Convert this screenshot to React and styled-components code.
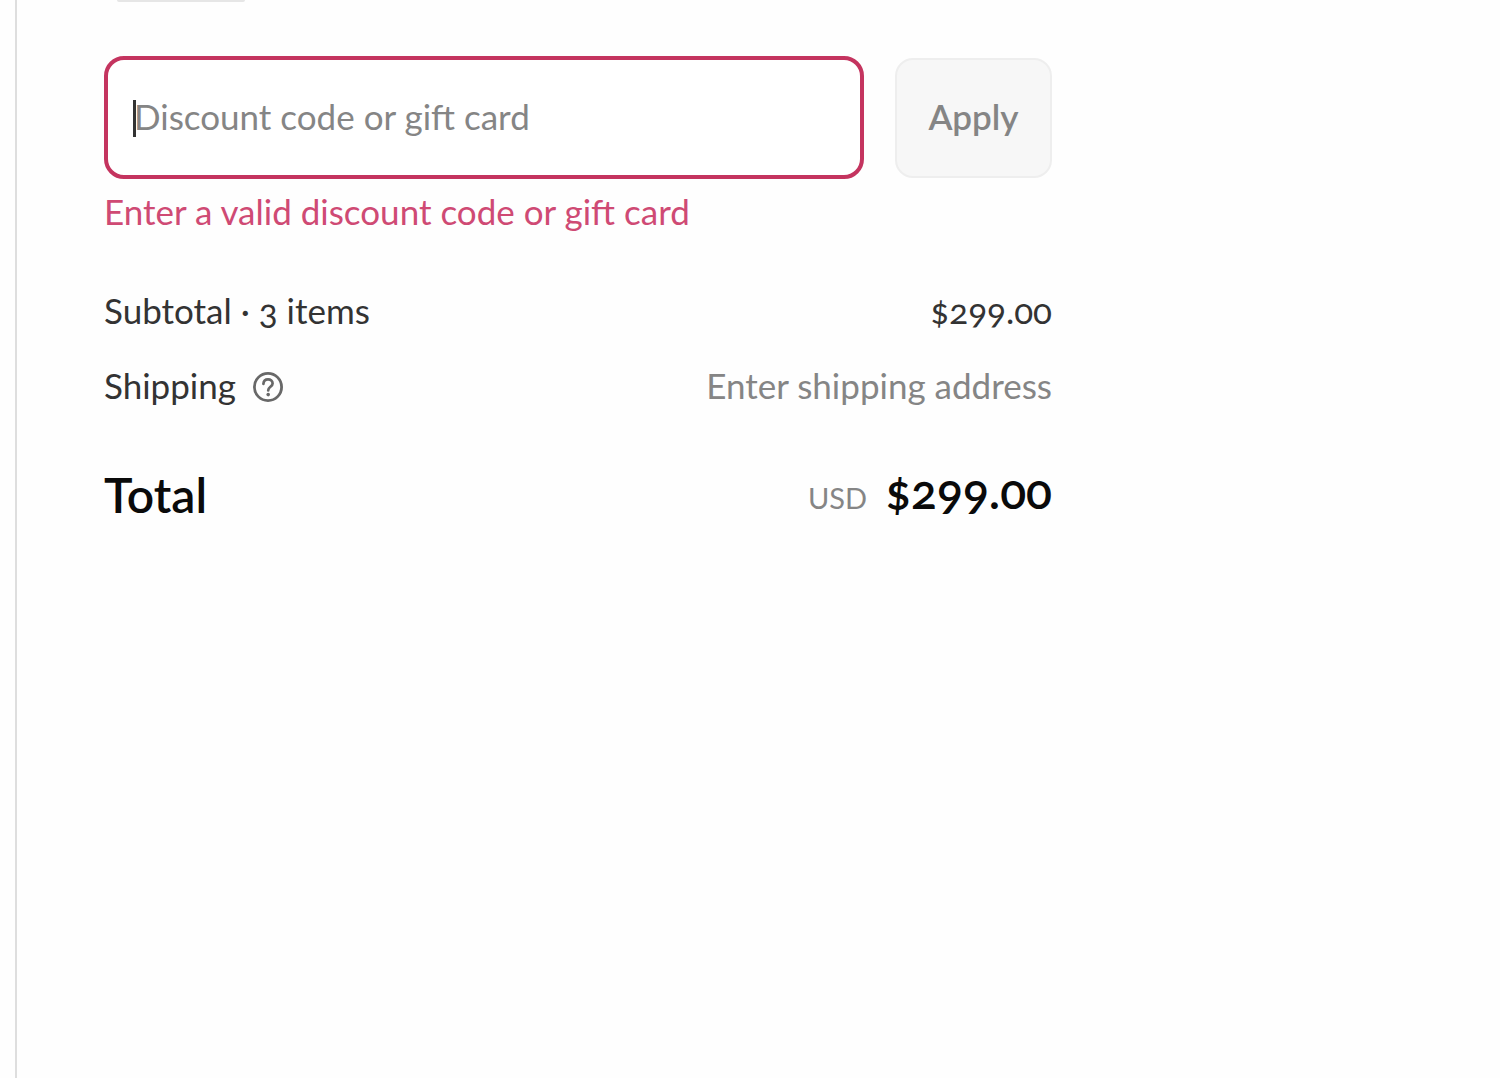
import { useState } from "react";
import styled, { createGlobalStyle } from "styled-components";

const GlobalStyle = createGlobalStyle`
*{
    box-sizing: border-box;
}
body{
    margin: 0;
    background: #fefefe;
    font-family: Lato, "Open Sans", sans-serif;
    font-variant-numeric: oldstyle-nums;
}
`

function HelpIcon(){
    return <svg width="32" height="32" viewBox="0 0 32 32" fill="none" stroke="#686868" aria-hidden="true">
        <circle cx="16" cy="16" r="13.6" strokeWidth="2.8"/>
        <path d="M11.4 12.8c.2-2.7 2-4.4 4.6-4.4 2.7 0 4.6 1.6 4.6 4 0 3.3-4.4 3.5-4.4 7" strokeWidth="2.7" strokeLinecap="round"/>
        <circle cx="16.2" cy="23.6" r="1.8" fill="#686868" stroke="none"/>
    </svg>
}

function DiscountForm(){
    const [code, setCode] = useState("");

    return <form onSubmit={(e) => e.preventDefault()}>
        <FormRow>
            <Field>
                <CodeInput
                    type="text"
                    aria-label="Discount code or gift card"
                    placeholder="Discount code or gift card"
                    aria-invalid="true"
                    aria-describedby="discount-error"
                    value={code}
                    onChange={(e) => setCode(e.target.value)}
                />
                {!code && <Caret/>}
            </Field>
            <ApplyButton type="submit">Apply</ApplyButton>
        </FormRow>
        <ErrorText id="discount-error">Enter a valid discount code or gift card</ErrorText>
    </form>
}

function App(){
    return <Wrapper>
        <GlobalStyle/>
        <Summary>
            <Thumbnail/>
            <DiscountForm/>
            <Costs>
                <Row>
                    <dt>Subtotal · 3 items</dt>
                    <dd>$299.00</dd>
                </Row>
                <Row>
                    <dt>
                        Shipping
                        <HelpButton type="button" aria-label="Shipping help"><HelpIcon/></HelpButton>
                    </dt>
                    <Muted>Enter shipping address</Muted>
                </Row>
                <TotalRow>
                    <dt>Total</dt>
                    <dd><Currency>USD</Currency>$299.00</dd>
                </TotalRow>
            </Costs>
        </Summary>
    </Wrapper>
}

export default App;


const Wrapper = styled.main`
    min-height: 100vh;
    margin-left: 15px;
    border-left: 2px solid #dedede;
    padding: 0 32px 0 87px;
`

const Summary = styled.section`
    max-width: 948px;
`

const Thumbnail = styled.div`
    width: 128px;
    height: 2px;
    margin: 0 0 54px 13px;
    background: #e6e6e6;
    border-radius: 0 0 4px 4px;
`

const FormRow = styled.div`
    display: flex;
    align-items: center;
    gap: 31px;
`

const Field = styled.div`
    position: relative;
    flex: 1;
`

const CodeInput = styled.input`
    display: block;
    width: 100%;
    height: 123px;
    padding: 0 26px 4px;
    border: 4px solid #c4345f;
    border-radius: 20px;
    outline: none;
    background: #fff;
    color: #333;
    font-family: inherit;
    font-size: 35px;

    &::placeholder{
        color: #858585;
        opacity: 1;
    }
`

const Caret = styled.span`
    position: absolute;
    top: 44px;
    left: 29px;
    width: 3px;
    height: 37px;
    background: #333;
    pointer-events: none;
`

const ApplyButton = styled.button`
    width: 157px;
    height: 120px;
    padding: 0 0 4px;
    border: 2px solid #eee;
    border-radius: 18px;
    background: #f7f7f7;
    color: #858585;
    font-family: inherit;
    font-size: 35px;
    font-weight: 600;
    cursor: pointer;
`

const ErrorText = styled.p`
    margin: 12px 0 0;
    color: #cf4a74;
    font-size: 35px;
    line-height: 40px;
`

const Costs = styled.dl`
    margin: 59px 0 0;
`

const Row = styled.div`
    display: flex;
    align-items: center;
    justify-content: space-between;
    margin-bottom: 35px;
    color: #333;
    font-size: 35px;
    line-height: 40px;

    dt{
        display: flex;
        align-items: center;
        gap: 16px;
    }
    dd{
        margin: 0;
    }
`

const Muted = styled.dd`
    color: #858585;
`

const HelpButton = styled.button`
    display: flex;
    margin-top: 4px;
    padding: 0;
    border: none;
    background: none;
    cursor: pointer;
`

const TotalRow = styled(Row)`
    margin: 54px 0 0;
    color: #0a0a0a;
    font-size: 48px;
    font-weight: 600;
    line-height: 64px;
`

const Currency = styled.span`
    margin-right: 18px;
    color: #858585;
    font-size: 29px;
    font-weight: 400;
`
